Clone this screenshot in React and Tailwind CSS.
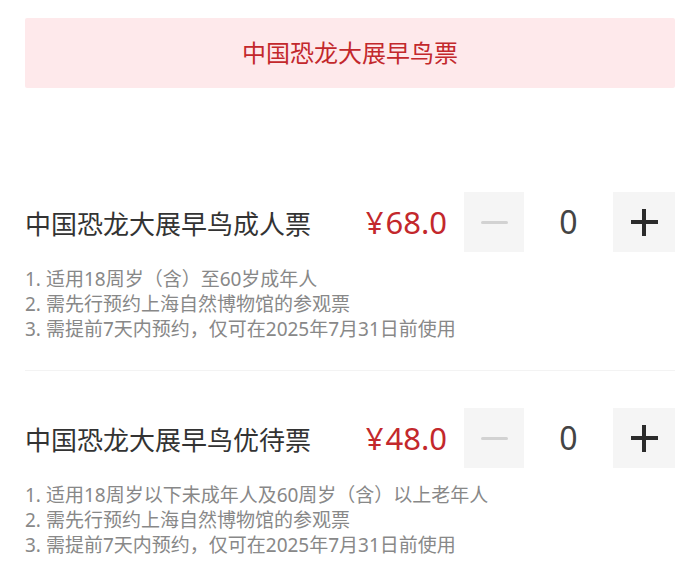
import { useState } from 'react';

const tickets = [
  {
    id: 'adult',
    name: '中国恐龙大展早鸟成人票',
    price: '68.0',
    notes: [
      '1. 适用18周岁（含）至60岁成年人',
      '2. 需先行预约上海自然博物馆的参观票',
      '3. 需提前7天内预约，仅可在2025年7月31日前使用',
    ],
  },
  {
    id: 'concession',
    name: '中国恐龙大展早鸟优待票',
    price: '48.0',
    notes: [
      '1. 适用18周岁以下未成年人及60周岁（含）以上老年人',
      '2. 需先行预约上海自然博物馆的参观票',
      '3. 需提前7天内预约，仅可在2025年7月31日前使用',
    ],
  },
];

function Stepper({ value, onChange }) {
  const disabled = value <= 0;
  return (
    <div className="flex items-center">
      <button
        onClick={() => !disabled && onChange(value - 1)}
        className="w-[60px] h-[60px] bg-[#f5f5f5] flex items-center justify-center"
      >
        <span className={`block w-[27px] h-[3px] rounded-full ${disabled ? 'bg-[#d2d2d2]' : 'bg-[#333]'}`}></span>
      </button>
      <div className="w-[89px] text-center text-[32px] leading-none text-[#444]">{value}</div>
      <button
        onClick={() => onChange(value + 1)}
        className="w-[62px] h-[60px] bg-[#f5f5f5] flex items-center justify-center relative"
      >
        <span className="block w-[27px] h-[4px] bg-[#2b2b2b]"></span>
        <span className="absolute w-[4px] h-[27px] bg-[#2b2b2b]"></span>
      </button>
    </div>
  );
}

export default function App() {
  const [counts, setCounts] = useState({ adult: 0, concession: 0 });

  return (
    <div className="h-screen overflow-hidden bg-white pl-[25px] pr-[10px] pt-[18px] font-['Noto_Sans','Noto_Sans_CJK_SC',sans-serif]">
      {/* 顶部标题 */}
      <div className="h-[70px] bg-[#fee9eb] rounded-[2px] flex items-center justify-center">
        <h1 className="text-[24px] text-[#c3282c]">中国恐龙大展早鸟票</h1>
      </div>

      <div className="mt-[67px]">
        {tickets.map((t) => (
          <div key={t.id} className="pt-[37px] pb-[28px] border-b border-[#f3f3f3]">
            <div className="flex items-center">
              <h2 className="flex-1 text-[26px] text-[#333] pt-[4px]">{t.name}</h2>
              <div className="text-[31px] text-[#c3282c] mr-[17px] leading-none">
                <span className="mr-[2px]">¥</span>{t.price}
              </div>
              <Stepper
                value={counts[t.id]}
                onChange={(v) => setCounts({ ...counts, [t.id]: v })}
              />
            </div>
            <div className="mt-[15px] text-[19px] leading-[25px] text-[#888]">
              {t.notes.map((n) => (
                <p key={n}>{n}</p>
              ))}
            </div>
          </div>
        ))}
      </div>
    </div>
  );
}
